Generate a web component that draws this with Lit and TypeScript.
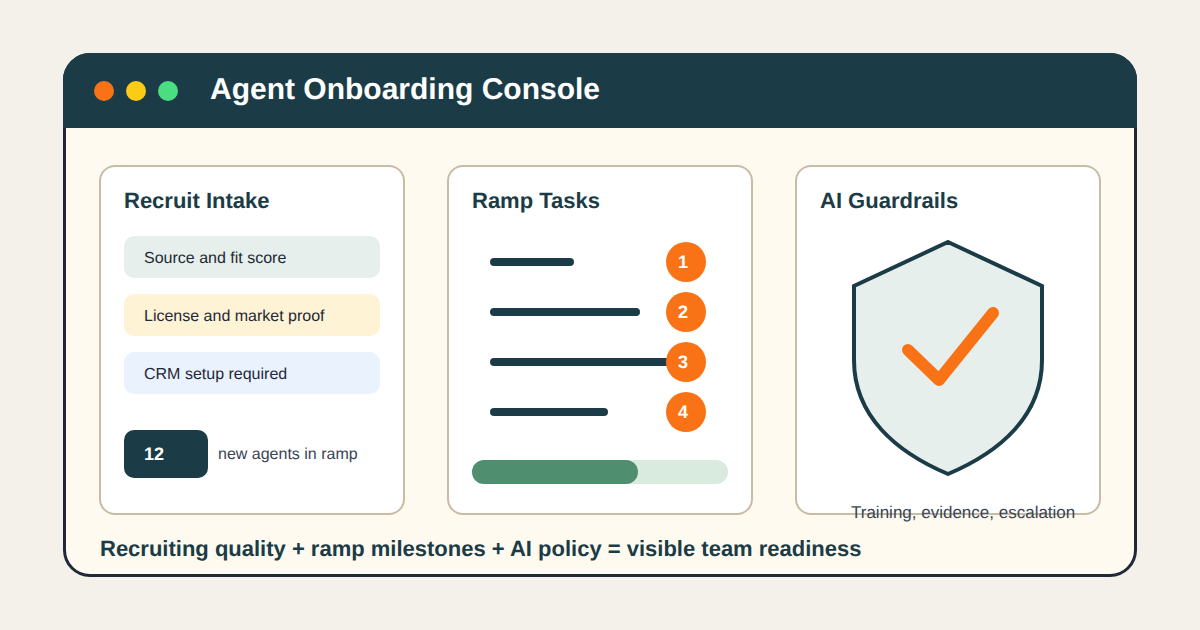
import { LitElement, html, css } from "lit";
import { customElement } from "lit/decorators.js";

const steps = [
  { n: 1, w: 84 },
  { n: 2, w: 150 },
  { n: 3, w: 180 },
  { n: 4, w: 118 },
];

@customElement("app-root")
export class AppRoot extends LitElement {
  static styles = css`
    :host {
      display: block;
      width: 1200px;
      height: 630px;
      background: #f4f1ea;
      font-family: "Liberation Sans", Arial, sans-serif;
      text-rendering: geometricPrecision;
      overflow: hidden;
    }
    .page { padding: 53px 63px; box-sizing: border-box; height: 630px; }
    .window {
      box-sizing: border-box;
      width: 1074px;
      height: 524px;
      border: 3px solid #1f2937;
      border-radius: 27px;
      background: #fffaf0;
      display: flex;
      flex-direction: column;
    }
    .head {
      margin: -3px -3px 0;
      height: 75px;
      flex: none;
      background: #1b3c46;
      border-radius: 27px 27px 0 0;
      display: flex;
      align-items: center;
      padding-left: 31px;
      box-sizing: border-box;
    }
    .dot { width: 20px; height: 20px; border-radius: 50%; margin-right: 12px; }
    .dot.o { background: #f97316; }
    .dot.y { background: #facc15; }
    .dot.g { background: #4ade80; margin-right: 32px; }
    .title { color: #fff; font-size: 30px; font-weight: 700; line-height: 34px; margin-bottom: 2px; }
    .cards {
      display: flex;
      gap: 42px;
      padding: 37px 0 0 33px;
    }
    .card {
      position: relative;
      box-sizing: border-box;
      width: 306px;
      height: 350px;
      border: 2px solid #c8bca6;
      border-radius: 16px;
      background: #fff;
      padding: 21px 23px 0;
    }
    .card h2 {
      margin: 0;
      color: #1b3c46;
      font-size: 22px;
      line-height: 25px;
      font-weight: 700;
    }
    .rows { display: flex; flex-direction: column; gap: 16px; margin-top: 23px; }
    .row {
      box-sizing: border-box;
      height: 42px;
      border-radius: 10px;
      padding: 4px 0 0 20px;
      display: flex;
      align-items: center;
      font-size: 16px;
      color: #1f2937;
    }
    .row.a { background: #e6efec; }
    .row.b { background: #fff3d6; }
    .row.c { background: #eaf2fe; }
    .stat { display: flex; align-items: center; margin-top: 36px; }
    .badge {
      width: 84px;
      height: 48px;
      border-radius: 10px;
      background: #1b3c46;
      color: #fff;
      font-size: 18px;
      font-weight: 700;
      display: flex;
      align-items: center;
      padding-left: 20px;
      box-sizing: border-box;
    }
    .stat span { margin: 2px 0 0 10px; font-size: 16px; color: #3a4454; }
    .steps { display: flex; flex-direction: column; gap: 10px; margin-top: 29px; }
    .step {
      display: grid;
      grid-template-columns: 18px 176px 40px;
      height: 40px;
      align-items: center;
    }
    .bar {
      grid-column: 2 / 4;
      grid-row: 1;
      height: 8px;
      border-radius: 4px;
      background: #1b3c46;
    }
    .num {
      grid-column: 3;
      grid-row: 1;
      z-index: 1;
      width: 40px;
      height: 40px;
      box-sizing: border-box;
      padding: 0 6px 0 0;
      border-radius: 50%;
      background: #f97316;
      color: #fff;
      font-size: 18px;
      font-weight: 700;
      display: flex;
      align-items: center;
      justify-content: center;
    }
    .track {
      margin-top: 28px;
      height: 24px;
      border-radius: 12px;
      background: #d9eadf;
      width: 256px;
    }
    .fill { height: 24px; width: 166px; border-radius: 12px; background: #4f8f70; }
    .shield { display: block; margin: 27px 0 0 30px; }
    .caption {
      position: absolute;
      left: 54px;
      top: 337px;
      white-space: nowrap;
      font-size: 17px;
      line-height: 18px;
      color: #3a4454;
    }
    .summary {
      margin: 21px 0 0 34px;
      color: #1b3c46;
      font-size: 22px;
      line-height: 25px;
      font-weight: 700;
      white-space: nowrap;
    }
  `;

  render() {
    return html`
      <div class="page">
        <div class="window">
          <div class="head">
            <div class="dot o"></div>
            <div class="dot y"></div>
            <div class="dot g"></div>
            <div class="title">Agent Onboarding Console</div>
          </div>
          <div class="cards">
            <div class="card">
              <h2>Recruit Intake</h2>
              <div class="rows">
                <div class="row a">Source and fit score</div>
                <div class="row b">License and market proof</div>
                <div class="row c">CRM setup required</div>
              </div>
              <div class="stat">
                <div class="badge">12</div>
                <span>new agents in ramp</span>
              </div>
            </div>
            <div class="card">
              <h2>Ramp Tasks</h2>
              <div class="steps">
                ${steps.map(
                  (s) => html`<div class="step">
                    <div class="bar" style="width:${s.w}px"></div>
                    <div class="num">${s.n}</div>
                  </div>`
                )}
              </div>
              <div class="track"><div class="fill"></div></div>
            </div>
            <div class="card">
              <h2>AI Guardrails</h2>
              <svg class="shield" width="196" height="238" viewBox="0 0 196 238">
                <path
                  d="M98 2 L192 46 V120 C192 176 150 212 98 234 C46 212 4 176 4 120 V46 Z"
                  fill="#e6efec"
                  stroke="#1b3c46"
                  stroke-width="4"
                  stroke-linejoin="miter"
                />
                <path
                  d="M58 110 L89 140 L143 73"
                  fill="none"
                  stroke="#f97316"
                  stroke-width="12"
                  stroke-linecap="round"
                  stroke-linejoin="round"
                />
              </svg>
              <div class="caption">Training, evidence, escalation</div>
            </div>
          </div>
          <div class="summary">Recruiting quality + ramp milestones + AI policy = visible team readiness</div>
        </div>
      </div>
    `;
  }
}
